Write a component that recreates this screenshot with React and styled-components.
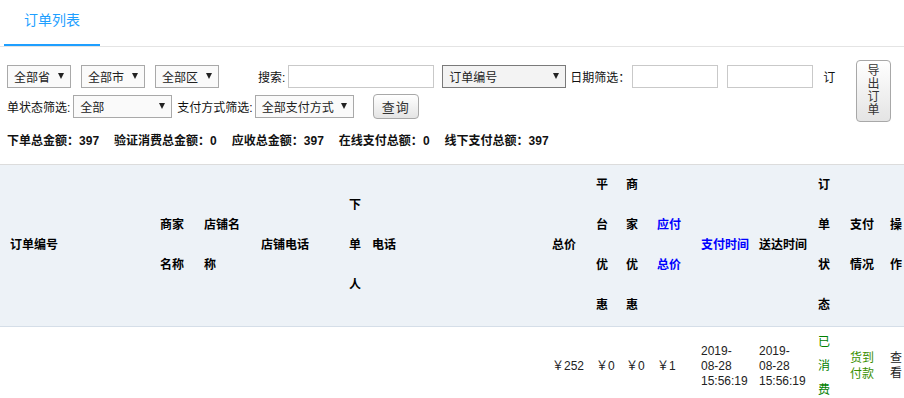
import React from "react";
import styled, { createGlobalStyle } from "styled-components";

const GlobalStyle = createGlobalStyle`
html, body {
  margin: 0;
  padding: 0;
  overflow: hidden;
  background: #fff;
}
body {
  font-family: "Liberation Sans", "Noto Sans CJK SC", sans-serif;
  font-size: 12px;
  color: #222;
}
`

const columns = [
  { title: "订单编号", w: 155, pl: 10, pr: 5 },
  { title: "商家名称", w: 44, pr: 15 },
  { title: "店铺名称", w: 57, pr: 16 },
  { title: "店铺电话", w: 88 },
  { title: "下单人", w: 23, pr: 6 },
  { title: "电话", w: 180 },
  { title: "总价", w: 44 },
  { title: "平台优惠", w: 30, pr: 13 },
  { title: "商家优惠", w: 31, pr: 14 },
  { title: "应付总价", w: 44, pr: 15, link: true },
  { title: "支付时间", w: 58, pr: 5, link: true },
  { title: "送达时间", w: 59, pr: 6 },
  { title: "订单状态", w: 32, pr: 15 },
  { title: "支付情况", w: 40, pr: 11 },
  { title: "操作", w: 32, pr: 15 },
]

const summary = [
  ["下单总金额", 397],
  ["验证消费总金额", 0],
  ["应收总金额", 397],
  ["在线支付总额", 0],
  ["线下支付总额", 397],
]

const App = () => {
  const order = {
    total: "￥252",
    platform: "￥0",
    shop: "￥0",
    pay: "￥1",
    payTime: ["2019-", "08-28 15:56:19"],
    arriveTime: ["2019-", "08-28 15:56:19"],
    status: "已消费",
    payType: "货到付款",
  }

  return (
    <>
      <GlobalStyle />
      <TabBar>
        <Tab>订单列表</Tab>
      </TabBar>

      <FilterWrap>
        <FilterRows>
          <FilterRow>
            <Select $w={64}>全部省<Arrow /></Select>
            <Select $w={64} $ml={10}>全部市<Arrow /></Select>
            <Select $w={64} $ml={10}>全部区<Arrow /></Select>
            <Label $ml={39}>搜索:</Label>
            <Input $w={146} $ml={3} />
            <Select $w={124} $ml={8} $dark>订单编号<Arrow /></Select>
            <Label $ml={4}>日期筛选：</Label>
            <Input $w={86} $ml={2} />
            <Input $w={86} $ml={9} />
            <Label $ml={10}>订</Label>
          </FilterRow>
          <FilterRow>
            <Label>单状态筛选:</Label>
            <Select $w={99} $ml={3}>全部<Arrow /></Select>
            <Label $ml={5}>支付方式筛选:</Label>
            <Select $w={99} $ml={2}>全部支付方式<Arrow /></Select>
            <QueryButton>查询</QueryButton>
          </FilterRow>
        </FilterRows>
        <ExportButton>导出订单</ExportButton>
      </FilterWrap>

      <Summary>
        {summary.map(([name, value]) => (
          <span key={name}>{name}：{value}</span>
        ))}
      </Summary>

      <TableWrap>
        <Table>
          <colgroup>
            {columns.map((c) => (
              <col key={c.title} style={{ width: c.w }} />
            ))}
          </colgroup>
          <thead>
            <tr>
              {columns.map((c) => (
                <Th key={c.title} $pl={c.pl} $pr={c.pr} $link={c.link}>
                  {c.title}
                </Th>
              ))}
            </tr>
          </thead>
          <tbody>
            <tr>
              <Td $pl={10} />
              <Td $pr={15} />
              <Td $pr={16} />
              <Td />
              <Td $pr={6} />
              <Td />
              <Td>{order.total}</Td>
              <Td $pr={13}>{order.platform}</Td>
              <Td $pr={14}>{order.shop}</Td>
              <Td $pr={15}>{order.pay}</Td>
              <Td $pr={5}>{order.payTime[0]}<wbr />{order.payTime[1]}</Td>
              <Td $pr={6}>{order.arriveTime[0]}<wbr />{order.arriveTime[1]}</Td>
              <StatusTd $pr={15}>{order.status}</StatusTd>
              <PayTypeTd $pr={11}>{order.payType}</PayTypeTd>
              <Td $pr={15}>查看</Td>
            </tr>
          </tbody>
        </Table>
      </TableWrap>
    </>
  )
}

const TabBar = styled.div`
display: flex;
align-items: flex-end;
height: 46px;
border-bottom: 1px solid #e4e4e4;
padding-left: 4px;
`
const Tab = styled.div`
box-sizing: border-box;
width: 96px;
height: 46px;
padding-top: 1px;
line-height: 38px;
text-align: center;
font-size: 14px;
color: #1e9fff;
border-bottom: 2px solid #1e9fff;
cursor: pointer;
`
const FilterWrap = styled.div`
display: flex;
justify-content: space-between;
align-items: flex-start;
padding: 13px 13px 0 7px;
`
const FilterRows = styled.div`
display: flex;
flex-direction: column;
gap: 6px;
padding-top: 5px;
`
const FilterRow = styled.div`
display: flex;
align-items: center;
min-height: 23px;
`
const Label = styled.span`
margin-left: ${(p) => p.$ml || 0}px;
color: #111;
white-space: nowrap;
`
const Select = styled.div`
box-sizing: border-box;
display: flex;
align-items: center;
justify-content: space-between;
width: ${(p) => p.$w}px;
height: 23px;
margin-left: ${(p) => p.$ml || 0}px;
padding: 0 6px 0 6px;
border: 1px solid ${(p) => (p.$dark ? "#7a7a7a" : "#a9a9a9")};
background: ${(p) => (p.$dark ? "#f3f3f3" : "#fafafa")};
color: #222;
white-space: nowrap;
cursor: pointer;
`
const Arrow = styled.i`
width: 0;
height: 0;
margin-top: -2px;
border-left: 3.5px solid transparent;
border-right: 3.5px solid transparent;
border-top: 6px solid #222;
`
const Input = styled.input`
box-sizing: border-box;
width: ${(p) => p.$w}px;
height: 23px;
margin: 0 0 0 ${(p) => p.$ml || 0}px;
padding: 0 4px;
border: 1px solid #c9c9c9;
background: #fff;
outline: none;
font: inherit;
`
const ButtonBase = styled.button`
box-sizing: border-box;
border: 1px solid #a8a8a8;
border-radius: 4px;
background: linear-gradient(#ffffff, #e4e4e4);
color: #333;
font-family: inherit;
cursor: pointer;
`
const QueryButton = styled(ButtonBase)`
width: 46px;
height: 25px;
margin-left: 19px;
padding: 0;
font-size: 13px;
letter-spacing: 1px;
`
const ExportButton = styled(ButtonBase)`
width: 35px;
height: 62px;
padding: 4px 10px;
font-size: 12px;
line-height: 13px;
`
const Summary = styled.div`
display: flex;
gap: 15px;
margin-top: 11px;
padding-left: 7px;
line-height: 16px;
font-weight: bold;
color: #111;
`
const TableWrap = styled.div`
width: 904px;
margin-top: 15px;
overflow: hidden;
`
const Table = styled.table`
width: 917px;
table-layout: fixed;
border-collapse: collapse;
border-spacing: 0;
`
const Th = styled.th`
padding: 0 ${(p) => p.$pr ?? 5}px 1px ${(p) => p.$pl ?? 5}px;
background: #edf2f7;
border-top: 1px solid #dcdcdc;
border-bottom: 1px solid #d5dee8;
line-height: 40px;
text-align: left;
vertical-align: middle;
font-weight: bold;
color: ${(p) => (p.$link ? "#0000ff" : "#000")};
`
const Td = styled.td`
padding: 3px ${(p) => p.$pr ?? 5}px 2px ${(p) => p.$pl ?? 5}px;
line-height: 15px;
vertical-align: middle;
color: #222;
`
const StatusTd = styled(Td)`
line-height: 24px;
color: #008000;
`
const PayTypeTd = styled(Td)`
line-height: 16px;
color: #3a8f00;
`

export default App;
